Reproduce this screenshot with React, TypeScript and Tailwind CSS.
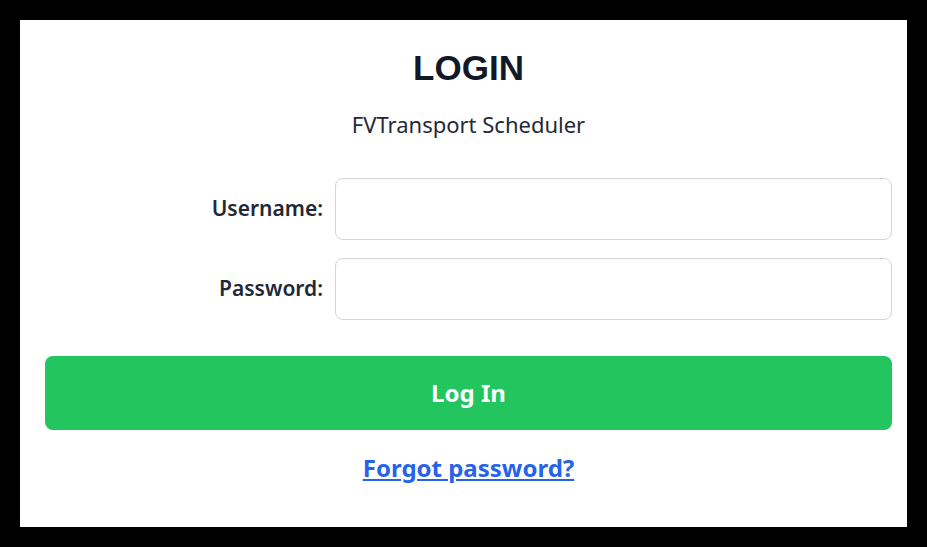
const App = () => {
  return (
    <div className="min-h-screen bg-black p-5 font-['Noto_Sans',sans-serif]">
      <div className="bg-white h-[507px] pt-[27px] pl-[25px] pr-[15px]">
        <h1 className="text-center font-['Liberation_Sans',Arial,sans-serif] text-[35px] leading-[42px] font-bold text-[#111827]">
          LOGIN
        </h1>
        <p className="mt-[20px] text-center text-[22px] leading-[30px] text-[#1f2937]">
          FVTransport Scheduler
        </p>

        <form className="mt-[39px]" onSubmit={(e) => e.preventDefault()}>
          <div className="grid grid-cols-[278px_1fr] items-center gap-x-3 gap-y-[18px]">
            <label htmlFor="username" className="text-right text-[21px] font-semibold text-[#1f2937]">
              Username:
            </label>
            <input
              id="username"
              type="text"
              className="h-[62px] rounded-lg border border-[#d4d4d8] px-3 text-[18px] outline-none"
            />
            <label htmlFor="password" className="text-right text-[21px] font-semibold text-[#1f2937]">
              Password:
            </label>
            <input
              id="password"
              type="password"
              className="h-[62px] rounded-lg border border-[#d4d4d8] px-3 text-[18px] outline-none"
            />
          </div>

          <button
            type="submit"
            className="mt-9 h-[74px] w-full rounded-lg bg-[#22c55e] text-[24px] font-bold text-white"
          >
            Log In
          </button>
        </form>

        <div className="mt-[20px] text-center">
          <a href="#" className="text-[24px] font-bold text-[#2563eb] underline">
            Forgot password?
          </a>
        </div>
      </div>
    </div>
  );
};

export default App;
